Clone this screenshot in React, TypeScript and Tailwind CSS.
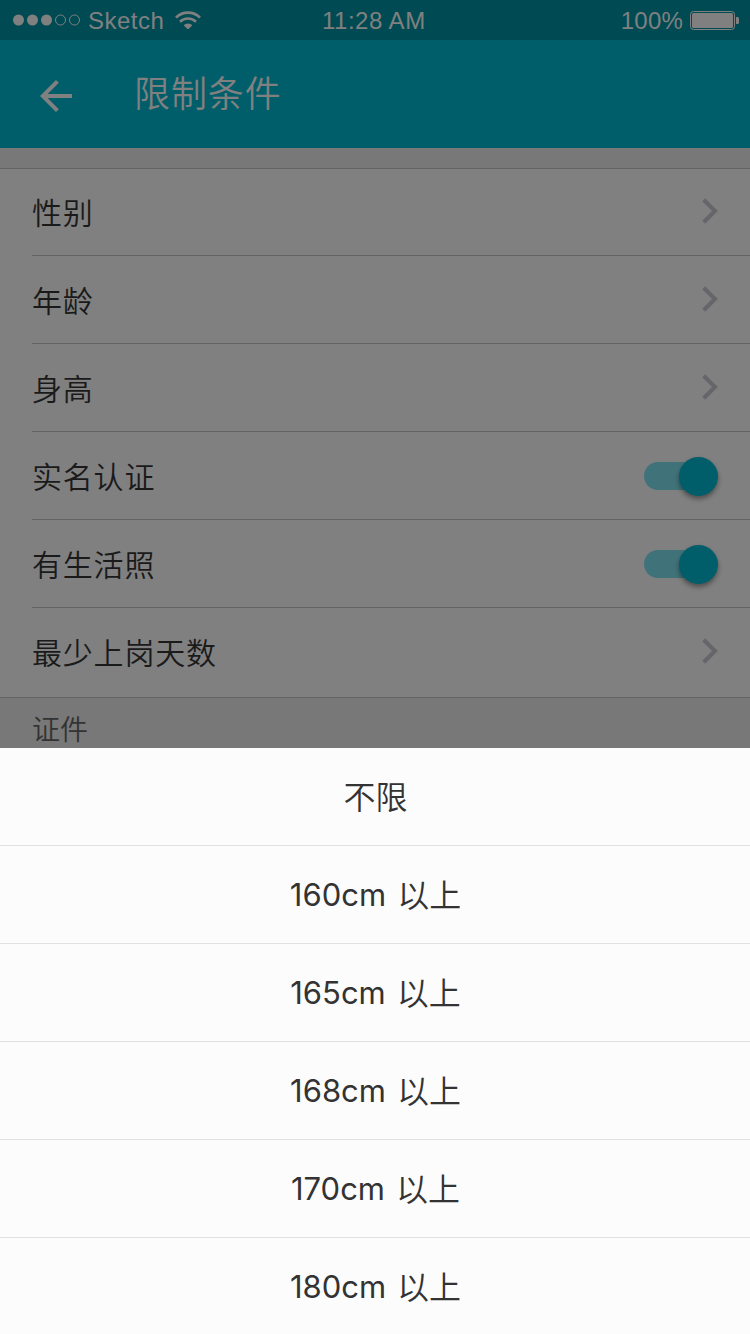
import React from "react";

const cjk = "font-['Noto_Sans_CJK_SC',sans-serif]";

function StatusBar() {
  return (
    <div className="relative flex h-10 items-center justify-between bg-[#004b53] pl-[13px] pr-[11px] font-['Liberation_Sans',sans-serif] text-[24px] font-normal leading-10 text-[#808080]">
      <div className="flex items-center">
        <svg width="68" height="12" viewBox="0 0 68 12" fill="currentColor">
          <circle cx="5.5" cy="6" r="5.5" />
          <circle cx="19.5" cy="6" r="5.5" />
          <circle cx="33.5" cy="6" r="5.5" />
          <circle cx="47.5" cy="6" r="5" fill="none" stroke="currentColor" />
          <circle cx="61.5" cy="6" r="5" fill="none" stroke="currentColor" />
        </svg>
        <span className="ml-[7px] w-[76px] whitespace-nowrap pt-0.5 tracking-[0.5px]">Sketch</span>
        <svg className="ml-[11px]" width="26" height="18" viewBox="0 0 26 18">
          <g fill="none" stroke="currentColor" strokeWidth="2.7">
            <path d="M1 6.600a17 17 0 0 1 24 0" />
            <path d="M5 10.800a11.300 11.300 0 0 1 16 0" />
          </g>
          <path d="M8.600 14.300a6.200 6.200 0 0 1 8.800 0L13 18.500z" fill="currentColor" />
        </svg>
      </div>
      <div className="absolute left-[322px] top-px whitespace-nowrap tracking-[0.5px]">11:28 AM</div>
      <div className="flex items-center">
        <span className="mr-[7px] pt-0.5 tracking-[0.2px]">100%</span>
        <svg width="49" height="20" viewBox="0 0 49 20">
          <rect x=".5" y="1.5" width="44" height="18" rx="3" fill="none" stroke="currentColor" />
          <rect x="2" y="3" width="41" height="15" rx="1.5" fill="currentColor" />
          <path d="M46 7h1.500q1.500 0 1.500 1.500v4q0 1.500-1.500 1.500H46z" fill="currentColor" />
        </svg>
      </div>
    </div>
  );
}

function Chevron() {
  return (
    <svg width="16" height="26" viewBox="0 0 16 26" className="mb-[2px]">
      <path d="M1.700 1.700L13 13 1.700 24.300" fill="none" stroke="#66666a" strokeWidth="4.200" />
    </svg>
  );
}

function Toggle() {
  return (
    <div className="flex h-7 w-[74px] items-center pt-px">
      <div className="mb-px h-7 w-[54px] shrink-0 rounded-full bg-[#407379]" />
      <div className="-ml-[19.5px] h-[39px] w-[39px] shrink-0 rounded-full bg-[#005e6a] shadow-[0_3px_5px_rgba(0,0,0,0.4)]" />
    </div>
  );
}

const rows = [
  { label: "性别" },
  { label: "年龄" },
  { label: "身高" },
  { label: "实名认证", toggle: true },
  { label: "有生活照", toggle: true },
  { label: "最少上岗天数" },
];

const options = [
  { text: "不限" },
  { height: "160cm", text: "以上" },
  { height: "165cm", text: "以上" },
  { height: "168cm", text: "以上" },
  { height: "170cm", text: "以上" },
  { height: "180cm", text: "以上" },
];

export default function App() {
  return (
    <div className={`flex h-[1334px] w-[750px] flex-col overflow-hidden bg-[#787878] font-[350] ${cjk}`}>
      <StatusBar />
      <header className="flex h-[108px] shrink-0 items-center bg-[#005e6a] pl-8 text-[#808080]">
        <svg className="mt-1" width="48" height="48" viewBox="0 0 24 24" fill="currentColor">
          <path d="M20 11H7.830l5.590-5.590L12 4l-8 8 8 8 1.410-1.410L7.830 13H20z" />
        </svg>
        <h1 className="mb-1.5 ml-[54px] text-[36px] leading-[50px] tracking-[0.9px]">限制条件</h1>
      </header>
      <main className="h-[600px] shrink-0 pt-5">
        <div className="border-b border-[#646464] border-t bg-[#808080]">
          {rows.map((row, i) => (
            <div key={row.label} className="pl-8">
              <div
                className={`flex items-center justify-between pr-8 ${
                  i < rows.length - 1
                    ? i === 0 ? "h-[87px] border-b border-[#646464]" : "h-[88px] border-b border-[#646464]"
                    : "h-[89px] border-b border-transparent pb-px"
                }`}
              >
                <span className="mb-0.5 text-[30px] leading-[44px] tracking-[0.8px] text-[#1a1a1a]">{row.label}</span>
                {row.toggle ? <Toggle /> : <Chevron />}
              </div>
            </div>
          ))}
        </div>
        <div className="pl-8 pt-[10px] text-[28px] leading-10 text-[#333333]">证件</div>
      </main>
      <ul className="relative h-[586px] shrink-0 bg-[#fcfcfc] text-[#333333]">
        {options.map((option, i) => (
          <li
            key={i}
            className="flex h-[98px] items-center justify-center border-b border-[#e1e1e1] pb-1 pl-px text-[32px] last:h-[97px] last:border-b-0"
          >
            {option.height && (
              <span className="mr-[11px] pt-1.5 font-['Inter',sans-serif] text-[31px] font-normal">{option.height}</span>
            )}
            <span>{option.text}</span>
          </li>
        ))}
      </ul>
    </div>
  );
}
